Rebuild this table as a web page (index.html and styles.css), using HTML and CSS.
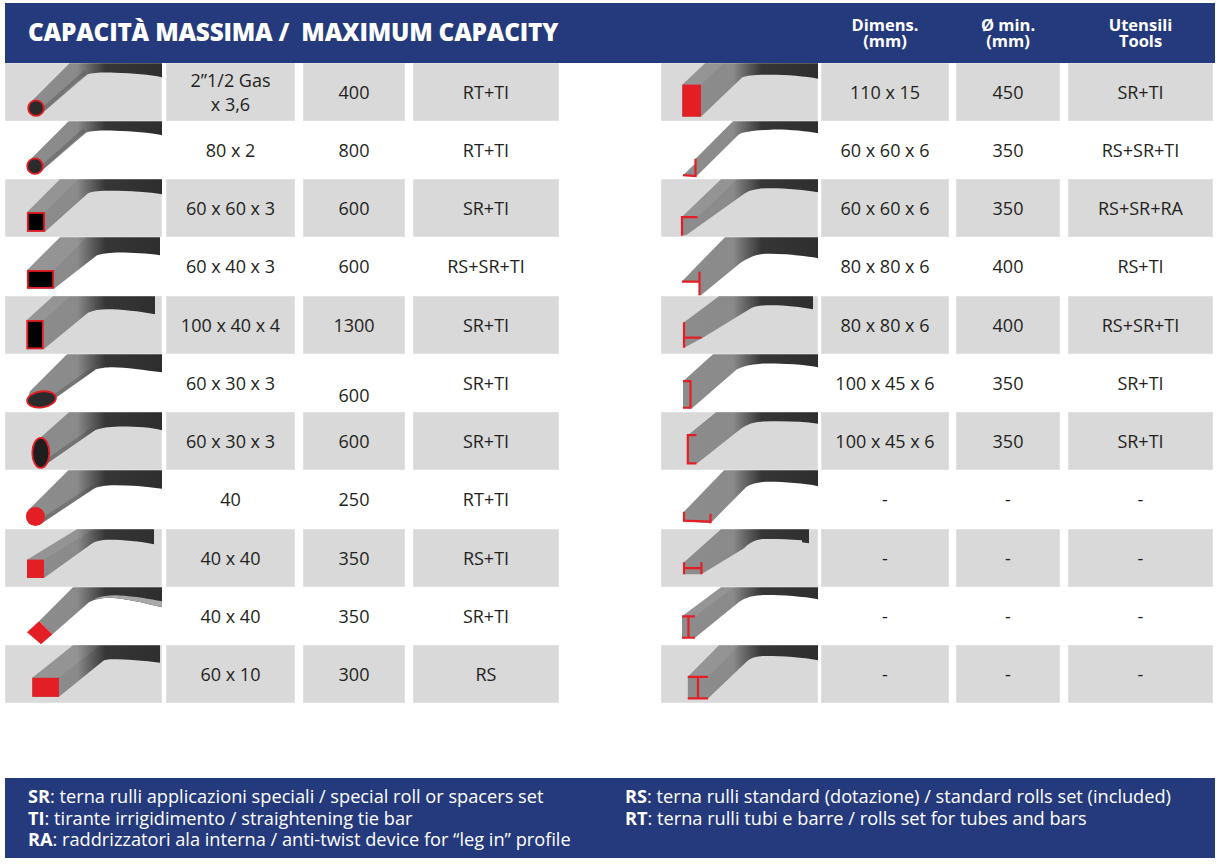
FILE: index.html
```html
<!DOCTYPE html>
<html lang="it">
<head>
<meta charset="utf-8">
<title>Capacità massima / Maximum capacity</title>
<link rel="stylesheet" href="styles.css">
</head>
<body>
<svg class="defs" width="0" height="0" aria-hidden="true">
  <defs>
    <linearGradient id="gb" gradientUnits="userSpaceOnUse" x1="0" y1="0" x2="157" y2="0">
      <stop offset="0" stop-color="#8e8e8e"/>
      <stop offset="0.46" stop-color="#8a8a8a"/>
      <stop offset="0.55" stop-color="#5f5f5f"/>
      <stop offset="0.64" stop-color="#363636"/>
      <stop offset="1" stop-color="#2e2e2e"/>
    </linearGradient>
  </defs>
</svg>
<div class="sheet">
  <header class="head">
    <h1 class="title">CAPACITÀ MASSIMA /&nbsp; MAXIMUM CAPACITY</h1>
    <div class="hcol h-dim">Dimens.<br>(mm)</div>
    <div class="hcol h-min">Ø min.<br>(mm)</div>
    <div class="hcol h-tl">Utensili<br>Tools</div>
  </header>

  <div class="tables">
    <div class="tbl">
      <div class="row g">
        <div class="c-img"><svg class="ico" viewBox="0 0 157 58"><path class="b" d="M25.3 39.3 L64.6 0 H157 V14 C145 11.5 128 10 110 9.5 C96 9.2 88 9.5 82 11.5 L36.7 50.7 Z"/><path class="sh" d="M35 49 L79 10"/><circle cx="31" cy="45" r="7.8" fill="#2b2b2b" stroke="#e31e24" stroke-width="1.8"/></svg></div>
        <div class="c c-dim two">2”1/2 Gas<br>x 3,6</div><div class="c c-min">400</div><div class="c c-tl">RT+TI</div>
      </div>
      <div class="row">
        <div class="c-img"><svg class="ico" viewBox="0 0 157 58"><path class="b" d="M24.3 39.3 L63.6 0 H157 V14 C145 11.5 128 10 110 9.5 C96 9.2 88 9.5 81 11.5 L35.7 50.7 Z"/><path class="sh" d="M34 49 L78 10"/><circle cx="30" cy="45" r="7.8" fill="#2b2b2b" stroke="#e31e24" stroke-width="1.8"/></svg></div>
        <div class="c c-dim">80 x 2</div><div class="c c-min">800</div><div class="c c-tl">RT+TI</div>
      </div>
      <div class="row g">
        <div class="c-img"><svg class="ico" viewBox="0 0 157 58"><path class="b" d="M22 33 L55 0 H157 V15 C145 13 125 11.5 105 11.5 C95 11.5 88 12 83 14 L40 52.5 H22 Z"/><path class="hl" d="M22 33 L55 0 H73 L40 33 Z"/><rect x="22.8" y="33.8" width="16.4" height="18" fill="#000" stroke="#e31e24" stroke-width="1.8"/></svg></div>
        <div class="c c-dim">60 x 60 x 3</div><div class="c c-min">600</div><div class="c c-tl">SR+TI</div>
      </div>
      <div class="row">
        <div class="c-img"><svg class="ico" viewBox="0 0 157 58"><path class="b" d="M22 33 L55 0 H155 V18 C140 16 120 15 108 15.5 C100 16 95 17 92 18 L49 51.5 H22 Z"/><path class="hl" d="M22 33 L55 0 H82 L49 33 Z"/><rect x="22.8" y="33.8" width="25.4" height="16.9" fill="#000" stroke="#e31e24" stroke-width="1.8"/></svg></div>
        <div class="c c-dim">60 x 40 x 3</div><div class="c c-min">600</div><div class="c c-tl">RS+SR+TI</div>
      </div>
      <div class="row g">
        <div class="c-img"><svg class="ico" viewBox="0 0 157 58"><path class="b" d="M21.5 24 L48 0 H150 V18 C135 15 115 13 102 13 C95 13 88 14 83 16.5 L38.6 53 H21.5 Z"/><path class="hl" d="M21.5 24 L48 0 H65 L38.6 24 Z"/><rect x="22.3" y="24.8" width="15.5" height="27.4" fill="#000" stroke="#e31e24" stroke-width="1.8"/></svg></div>
        <div class="c c-dim">100 x 40 x 4</div><div class="c c-min">1300</div><div class="c c-tl">SR+TI</div>
      </div>
      <div class="row">
        <div class="c-img"><svg class="ico" viewBox="0 0 157 58"><path class="b" d="M25 37 L62 0 H157 V18 C140 16 120 13 108 13 C100 13 95 14 91 15 L50 44 L36 53 L22 46 Z"/><path class="sh" d="M47 44 L88 15"/><ellipse cx="36.5" cy="45.3" rx="14.5" ry="8" transform="rotate(-8 36.5 45.3)" fill="#2b2b2b" stroke="#e31e24" stroke-width="1.8"/></svg></div>
        <div class="c c-dim">60 x 30 x 3</div><div class="c c-min low">600</div><div class="c c-tl">SR+TI</div>
      </div>
      <div class="row g">
        <div class="c-img"><svg class="ico" viewBox="0 0 157 58"><path class="b" d="M28 32 L64 0 H157 V18 C145 15 125 14 110 14.5 C100 15 95 16 90 18 L44 50 L36 56 Z"/><path class="sh" d="M42 49 L88 17"/><ellipse cx="35.8" cy="40.8" rx="8.5" ry="15" fill="#1e1e1e" stroke="#e31e24" stroke-width="1.8"/></svg></div>
        <div class="c c-dim">60 x 30 x 3</div><div class="c c-min">600</div><div class="c c-tl">SR+TI</div>
      </div>
      <div class="row">
        <div class="c-img"><svg class="ico" viewBox="0 0 157 58"><path class="b" d="M23.7 39.7 L63.4 0 H157 V18.5 C140 16 125 15 110 15 C100 15 93 16 88 19 L37.1 53.1 Z"/><path class="sh" d="M36 51 L86 18"/><circle cx="30.4" cy="46.4" r="9.5" fill="#e31e24"/></svg></div>
        <div class="c c-dim">40</div><div class="c c-min">250</div><div class="c c-tl">RT+TI</div>
      </div>
      <div class="row g">
        <div class="c-img"><svg class="ico" viewBox="0 0 157 58"><path class="b" d="M22 30.5 L72 0 H149 V15 C135 12 118 10.5 105 10.5 C95 10.5 90 12 86 15 L39 48.8 H22 Z"/><path class="hl" d="M22 30.5 L72 0 H89 L39 30.5 Z"/><rect x="22" y="30.5" width="17" height="18.3" fill="#e31e24"/></svg></div>
        <div class="c c-dim">40 x 40</div><div class="c c-min">350</div><div class="c c-tl">RS+TI</div>
      </div>
      <div class="row">
        <div class="c-img"><svg class="ico" viewBox="0 0 157 58"><path class="b" d="M34 34 L68 0 H157 V20 C140 16 120 11 106 10.5 C96 10.5 90 12 84 15 L47.5 47 Z"/><path fill="#a8a8a8" d="M88 12.5 C95 9 104 8 114 8.3 C130 9 145 12 157 14 V20 C140 16 120 11 106 10.5 C96 10.5 91 11.5 88 12.5 Z"/><polygon points="22,45 34,34 47.5,47 36,57" fill="#e31e24"/></svg></div>
        <div class="c c-dim">40 x 40</div><div class="c c-min">350</div><div class="c c-tl">SR+TI</div>
      </div>
      <div class="row g">
        <div class="c-img"><svg class="ico" viewBox="0 0 157 58"><path class="b" d="M27.3 32.7 L68 0 H155 V17.5 C140 15.5 120 14 108 14 C104 14 101 14.5 99 15 L54 51.7 H27.3 Z"/><path class="hl" d="M27.3 32.7 L68 0 H95 L54 32.7 Z"/><rect x="27.3" y="32.7" width="26.7" height="19" fill="#e31e24"/></svg></div>
        <div class="c c-dim">60 x 10</div><div class="c c-min">300</div><div class="c c-tl">RS</div>
      </div>
    </div>

    <div class="tbl r">
      <div class="row g">
        <div class="c-img"><svg class="ico" viewBox="0 0 157 58"><path class="b" d="M21.3 21.5 L44 0 H157 V15.5 C145 13 125 11.5 110 11.5 C95 11.5 87 12 81.3 14.2 L40 53.5 H21.3 Z"/><path class="hl" d="M21.3 21.5 L44 0 H62.7 L40 21.5 Z"/><rect x="21.3" y="21.5" width="18.7" height="32" fill="#e31e24"/></svg></div>
        <div class="c c-dim">110 x 15</div><div class="c c-min">450</div><div class="c c-tl">SR+TI</div>
      </div>
      <div class="row">
        <div class="c-img"><svg class="ico" viewBox="0 0 157 58"><path class="b" d="M34.5 37.5 L72 0 H157 V12 C145 10 125 8 110 8.5 C95 9 85 10 78 13 L35.5 55 L22 54 L34.5 42 Z"/><path class="red" d="M34.5 37.5 V55 L22 54"/></svg></div>
        <div class="c c-dim">60 x 60 x 6</div><div class="c c-min">350</div><div class="c c-tl">RS+SR+TI</div>
      </div>
      <div class="row g">
        <div class="c-img"><svg class="ico" viewBox="0 0 157 58"><path class="b" d="M21 37.5 L60 0 H157 V13 C145 11 125 9 110 9 C97 9 90 11 84 14 L25 56 H21 Z"/><path class="hl" d="M21 38 L60 0 H76 L36.5 38 Z"/><path class="red" d="M21 56.5 V38 H36.5"/></svg></div>
        <div class="c c-dim">60 x 60 x 6</div><div class="c c-min">350</div><div class="c c-tl">RS+SR+RA</div>
      </div>
      <div class="row">
        <div class="c-img"><svg class="ico" viewBox="0 0 157 58"><path class="b" d="M21 44 L64 0 H157 V21 C140 18 115 16 100 17 C92 18 85 22 79 26 L40 58 H38.5 L38.5 44 Z"/><path class="red" d="M38.5 34.5 V58 M21 44.5 H38.5"/></svg></div>
        <div class="c c-dim">80 x 80 x 6</div><div class="c c-min">400</div><div class="c c-tl">RS+TI</div>
      </div>
      <div class="row g">
        <div class="c-img"><svg class="ico" viewBox="0 0 157 58"><path class="b" d="M23 26 L58 0 H152 V13 C140 11 125 9 110 9 C100 9 95 10 90 12 L41 42 L23 51.5 Z"/><path class="red" d="M23 26 V51.5 M23 41.5 H40.5"/></svg></div>
        <div class="c c-dim">80 x 80 x 6</div><div class="c c-min">400</div><div class="c c-tl">RS+SR+TI</div>
      </div>
      <div class="row">
        <div class="c-img"><svg class="ico" viewBox="0 0 157 58"><path class="b" d="M22 27 L52 0 H157 V13 C140 10 115 9 100 9.5 C90 10 82 12 76 15 L31 54 H22 Z"/><path class="red" d="M22 27 H29.5 V53.6 H22"/></svg></div>
        <div class="c c-dim">100 x 45 x 6</div><div class="c c-min">350</div><div class="c c-tl">SR+TI</div>
      </div>
      <div class="row g">
        <div class="c-img"><svg class="ico" viewBox="0 0 157 58"><path class="b" d="M26.8 23 L55 0 H157 V11.5 C140 9 120 8.5 100 9.5 C90 10 83 14 78 18 L36 51.3 H26.8 Z"/><path class="red" d="M35.4 23 H26.8 V51.3 H35.4"/></svg></div>
        <div class="c c-dim">100 x 45 x 6</div><div class="c c-min">350</div><div class="c c-tl">SR+TI</div>
      </div>
      <div class="row">
        <div class="c-img"><svg class="ico" viewBox="0 0 157 58"><path class="b" d="M23 41.5 L63 0 H157 V16 C140 13 115 11 100 12 C92 13 88 15 85 17 L49.5 53 L23 51 Z"/><path class="red" d="M23 41.5 V50.5 L49.5 51.5 M49.5 43.5 V53"/></svg></div>
        <div class="c c-dim">-</div><div class="c c-min">-</div><div class="c c-tl">-</div>
      </div>
      <div class="row g">
        <div class="c-img"><svg class="ico" viewBox="0 0 157 58"><path class="b" d="M23 33 L60 0 H148 V14 L141 13 V11 C125 10 110 9.5 100 10 C92 11 87 15 83 19 L40.4 45 H23 Z"/><path class="red" d="M23 33 V45 M40.4 33 V45 M23 39 H40.4"/></svg></div>
        <div class="c c-dim">-</div><div class="c c-min">-</div><div class="c c-tl">-</div>
      </div>
      <div class="row">
        <div class="c-img"><svg class="ico" viewBox="0 0 157 58"><path class="b" d="M21 29 L60 0 H157 V12 C140 9 115 7.5 100 8 C90 8.5 84 11 79 14 L34 50.6 H21 Z"/><path class="hl" d="M21 29.3 L60 0 H73 L34 29.3 Z"/><path class="red" d="M21 29.25 H34 M27.5 29.25 V50.6 M21 50.6 H34"/></svg></div>
        <div class="c c-dim">-</div><div class="c c-min">-</div><div class="c c-tl">-</div>
      </div>
      <div class="row g">
        <div class="c-img"><svg class="ico" viewBox="0 0 157 58"><path class="b" d="M26.8 31.7 L58 0 H157 V15 C140 12 115 10.5 100 11 C92 11.5 88 14 85 17 L47 53.3 H26.8 Z"/><path class="hl" d="M26.8 31.7 L58 0 H78 L47 31.7 Z"/><path class="red" d="M26.8 31.7 H47 M37 31.7 V53.3 M26.8 53.3 H47"/></svg></div>
        <div class="c c-dim">-</div><div class="c c-min">-</div><div class="c c-tl">-</div>
      </div>
    </div>
  </div>

  <footer class="foot">
    <div class="fcol">
      <p><b>SR</b>: terna rulli applicazioni speciali / special roll or spacers set</p>
      <p><b>TI</b>: tirante irrigidimento / straightening tie bar</p>
      <p><b>RA</b>: raddrizzatori ala interna / anti-twist device for “leg in” profile</p>
    </div>
    <div class="fcol">
      <p><b>RS</b>: terna rulli standard (dotazione) / standard rolls set (included)</p>
      <p><b>RT</b>: terna rulli tubi e barre / rolls set for tubes and bars</p>
    </div>
  </footer>
</div>
</body>
</html>
```

FILE: styles.css
```css
* { box-sizing: border-box; }

body {
  margin: 0;
  background: #ffffff;
  font-family: "Open Sans", "Noto Sans", sans-serif;
  color: #231f20;
}

.defs { display: block; width: 0; height: 0; }

.sheet {
  width: 1210px;
  margin-left: 5px;
  padding-top: 2.5px;
}

/* header band */
.head {
  height: 60px;
  background: #253a7c;
  display: flex;
  align-items: center;
  color: #ffffff;
}

.title {
  flex: 1;
  margin: 0;
  padding-left: 23px;
  font-size: 24.3px;
  font-weight: 800;
  letter-spacing: -0.2px;
  line-height: 1;
}

.hcol {
  text-align: center;
  font-size: 16.5px;
  font-weight: 700;
  line-height: 16px;
}

.h-dim { width: 128px; margin-right: 7px; }
.h-min { width: 104px; margin-right: 8px; }
.h-tl  { width: 145px; margin-right: 2px; }

/* tables */
.tables {
  display: grid;
  grid-template-columns: 554px 552px;
  column-gap: 102px;
}

.row {
  display: flex;
  height: 58.25px;
}

.c-img { width: 157px; }
.ico { display: block; width: 157px; height: 58.25px; }

.c {
  display: flex;
  align-items: center;
  justify-content: center;
  text-align: center;
  font-size: 18px;
  line-height: 24px;
}

.c-dim { width: 129px; margin-left: 4px; }
.c-min { width: 102px; margin-left: 8px; }
.c-tl  { width: 146px; margin-left: 8px; }

.r .c-dim { width: 128px; margin-left: 3px; }
.r .c-min { width: 104px; margin-left: 7px; }
.r .c-tl  { width: 145px; margin-left: 8px; }

.row.g .c,
.row.g .c-img {
  background: #d9d9d9;
  box-shadow: inset 0 0 0 1px #e1e1e1;
}

.c.low { padding-top: 24px; }

/* icon parts */
.b { fill: url(#gb); }
.hl { fill: #ffffff; opacity: 0.08; }
.sh { fill: none; stroke: #4a4a4a; stroke-width: 4; opacity: 0.35; stroke-linecap: round; }
.red { fill: none; stroke: #e31e24; stroke-width: 2.2; }

/* footer legend */
.foot {
  margin-top: 74.75px;
  height: 80px;
  background: #253a7c;
  color: #ffffff;
  display: grid;
  grid-template-columns: 597px 1fr;
  padding: 8px 0 0 23px;
  font-size: 18.2px;
  line-height: 21.5px;
}

.foot p { margin: 0; white-space: nowrap; }
.foot b { font-weight: 700; }
```
